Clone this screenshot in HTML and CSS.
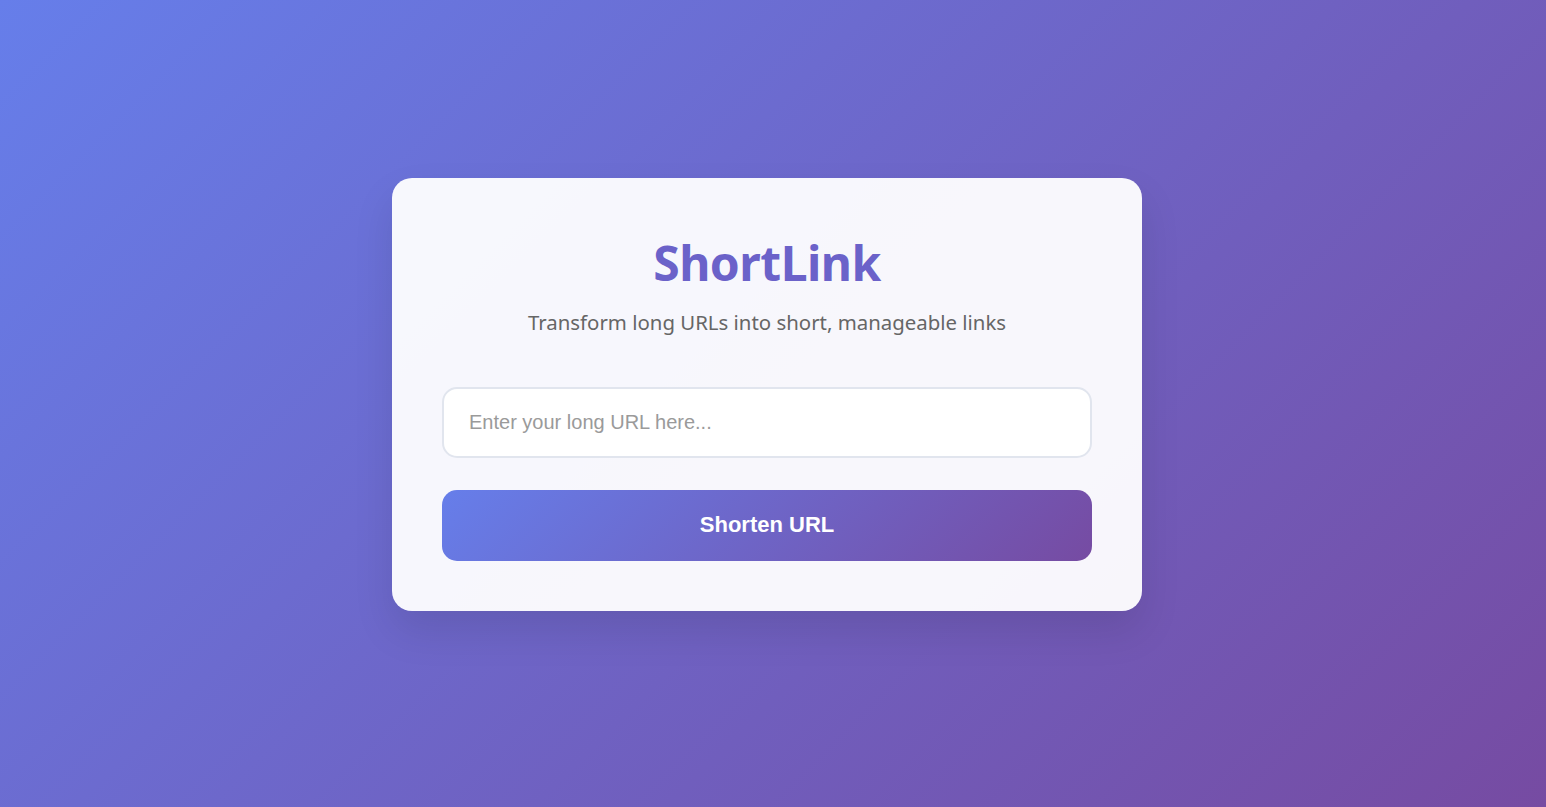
FILE: index.html
```html
<!DOCTYPE html>
<html lang="en">
<head>
<meta charset="utf-8">
<title>ShortLink</title>
<link rel="stylesheet" href="styles.css">
</head>
<body>
<main class="page">
  <section class="card">
    <h1 class="title">ShortLink</h1>
    <p class="subtitle">Transform long URLs into short, manageable links</p>
    <form class="form">
      <input class="url-input" type="text" placeholder="Enter your long URL here...">
      <button class="btn" type="button">Shorten URL</button>
    </form>
  </section>
</main>
</body>
</html>
```

FILE: styles.css
```css
* { box-sizing: border-box; }
html, body { margin: 0; padding: 0; }
body {
  min-height: 100vh;
  background: linear-gradient(135deg, #667eea 0%, #764ba2 100%);
  font-family: "Liberation Sans", Arial, sans-serif;
}
.page {
  min-height: 100vh;
  display: flex;
  align-items: center;
  justify-content: center;
  padding: 0 12px 19px 0;
}
.card {
  width: 750px;
  background: rgba(255, 255, 255, 0.95);
  border-radius: 20px;
  padding: 50px;
  box-shadow: 0 20px 40px rgba(0, 0, 0, 0.1);
  text-align: center;
}
.title {
  margin: 0 0 11px;
  font-family: "Noto Sans", "Open Sans", sans-serif;
  font-weight: 700;
  font-size: 48px;
  line-height: 69px;
  color: #6b62c9;
  letter-spacing: -0.5px;
}
.subtitle {
  margin: 0 0 51px;
  font-family: "Noto Sans", "Open Sans", sans-serif;
  font-size: 20.4px;
  line-height: 28px;
  color: #666;
}
.form {
  display: flex;
  flex-direction: column;
  gap: 32px;
}
.url-input {
  width: 100%;
  height: 71px;
  padding: 0 25px;
  border: 2px solid #e1e5ee;
  border-radius: 15px;
  background: #fff;
  font-family: "Liberation Sans", Arial, sans-serif;
  font-size: 20px;
  color: #333;
  outline: none;
}
.url-input::placeholder { color: #9a9a9a; }
.btn {
  width: 100%;
  height: 71px;
  border: none;
  border-radius: 15px;
  background: linear-gradient(135deg, #667eea 0%, #764ba2 100%);
  color: #fff;
  font-family: "Liberation Sans", Arial, sans-serif;
  font-weight: 700;
  font-size: 22px;
  cursor: pointer;
}
```
